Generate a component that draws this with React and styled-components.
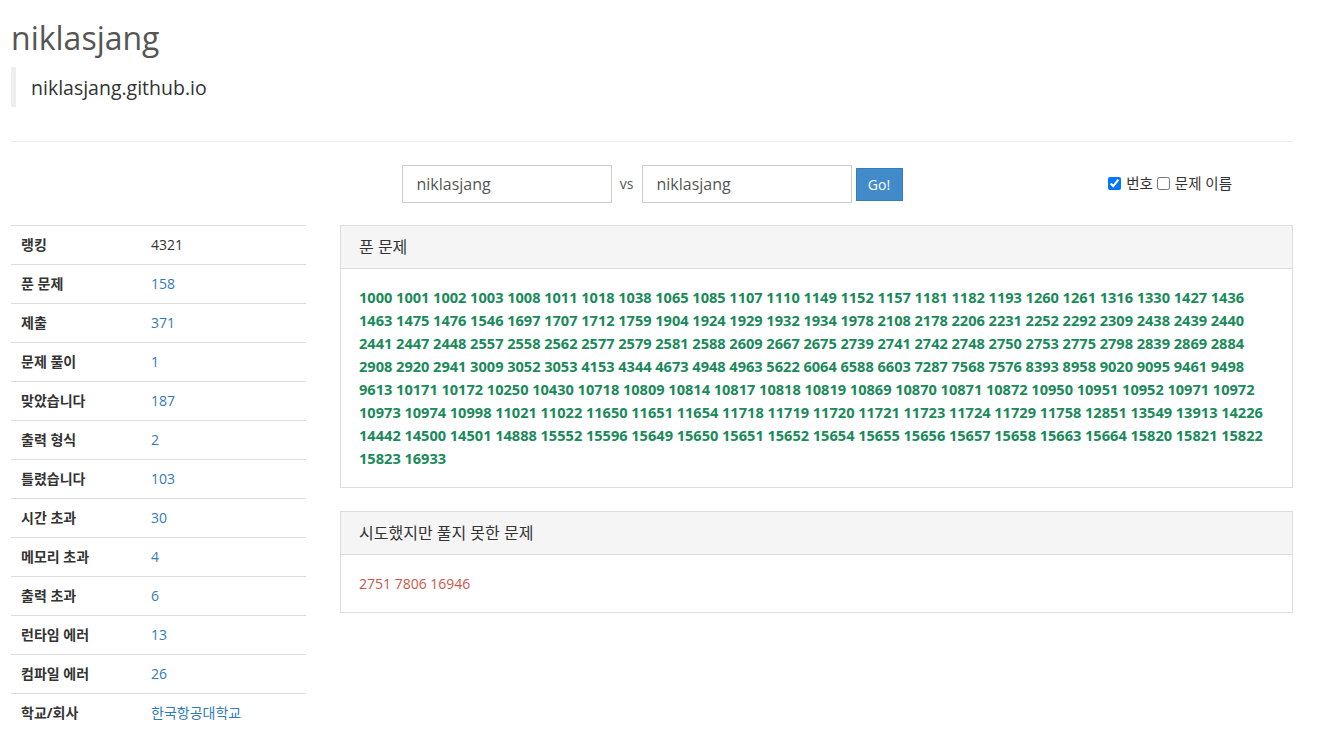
import React from "react";
import styled, { createGlobalStyle } from "styled-components";

const solved = [
  1000, 1001, 1002, 1003, 1008, 1011, 1018, 1038, 1065, 1085, 1107, 1110, 1149, 1152, 1157, 1181, 1182, 1193, 1260, 1261, 1316, 1330, 1427, 1436,
  1463, 1475, 1476, 1546, 1697, 1707, 1712, 1759, 1904, 1924, 1929, 1932, 1934, 1978, 2108, 2178, 2206, 2231, 2252, 2292, 2309, 2438, 2439, 2440,
  2441, 2447, 2448, 2557, 2558, 2562, 2577, 2579, 2581, 2588, 2609, 2667, 2675, 2739, 2741, 2742, 2748, 2750, 2753, 2775, 2798, 2839, 2869, 2884,
  2908, 2920, 2941, 3009, 3052, 3053, 4153, 4344, 4673, 4948, 4963, 5622, 6064, 6588, 6603, 7287, 7568, 7576, 8393, 8958, 9020, 9095, 9461, 9498,
  9613, 10171, 10172, 10250, 10430, 10718, 10809, 10814, 10817, 10818, 10819, 10869, 10870, 10871, 10872, 10950, 10951, 10952, 10971, 10972,
  10973, 10974, 10998, 11021, 11022, 11650, 11651, 11654, 11718, 11719, 11720, 11721, 11723, 11724, 11729, 11758, 12851, 13549, 13913, 14226,
  14442, 14500, 14501, 14888, 15552, 15596, 15649, 15650, 15651, 15652, 15654, 15655, 15656, 15657, 15658, 15663, 15664, 15820, 15821, 15822,
  15823, 16933,
];

const failed = [2751, 7806, 16946];

const stats = [
  { label: "랭킹", value: "4321", plain: true },
  { label: "푼 문제", value: "158" },
  { label: "제출", value: "371" },
  { label: "문제 풀이", value: "1" },
  { label: "맞았습니다", value: "187" },
  { label: "출력 형식", value: "2" },
  { label: "틀렸습니다", value: "103" },
  { label: "시간 초과", value: "30" },
  { label: "메모리 초과", value: "4" },
  { label: "출력 초과", value: "6" },
  { label: "런타임 에러", value: "13" },
  { label: "컴파일 에러", value: "26" },
  { label: "학교/회사", value: "한국항공대학교" },
];

const GlobalStyle = createGlobalStyle`
  * { box-sizing: border-box; }
  body {
    margin: 0;
    background: #fff;
    color: #333;
    font-family: "Open Sans", "Noto Sans CJK KR", sans-serif;
    font-size: 14px;
    line-height: 1.42857;
  }
`;

const Container = styled.div`
  width: 1282px;
  margin-left: 11px;
`;

const Title = styled.h1`
  margin: 20px 0 0;
  font-size: 32px;
  font-weight: 400;
  line-height: 35px;
  color: #555;
`;

const Quote = styled.blockquote`
  margin: 12px 0 34px;
  padding: 10px 15px 9px;
  border-left: 5px solid #eee;
  font-size: 19.5px;
  line-height: 21px;
  color: #333;
`;

const Rule = styled.hr`
  margin: 0;
  border: 0;
  border-top: 1px solid #eee;
`;

const FormRow = styled.div`
  display: grid;
  grid-template-columns: 1fr auto 1fr;
  align-items: center;
  margin: 23px 0 22px;
`;

const Compare = styled.form`
  grid-column: 2;
  display: flex;
  align-items: center;
`;

const Input = styled.input`
  width: 210px;
  height: 38px;
  padding: 6px 14px;
  border: 1px solid #ccc;
  border-radius: 0;
  font-family: inherit;
  font-size: 16px;
  color: #555;
  outline: none;
`;

const Vs = styled.span`
  width: 30px;
  text-align: center;
  color: #555;
  font-size: 14px;
`;

const GoButton = styled.button`
  margin-left: 4px;
  width: 47px;
  height: 33px;
  border: 1px solid #357ebd;
  border-radius: 0;
  background: #428bca;
  color: #fff;
  font-family: inherit;
  font-size: 14px;
  padding: 0;
`;

const Options = styled.div`
  grid-column: 3;
  justify-self: end;
  display: flex;
  align-items: center;
  padding-right: 61px;
  font-size: 14.5px;
  color: #333;
`;

const Option = styled.label`
  display: flex;
  align-items: center;
  gap: 5px;
  margin-left: ${(p) => (p.$first ? "0" : "4px")};

  input {
    margin: 0;
    width: 13px;
    height: 13px;
  }
`;

const Columns = styled.div`
  display: grid;
  grid-template-columns: 295px 1fr;
  gap: 34px;
  align-items: start;
`;

const StatTable = styled.table`
  width: 100%;
  border-collapse: collapse;
`;

const Row = styled.tr`
  border-top: 1px solid #ddd;
`;

const Label = styled.th`
  width: 140px;
  padding: 9px 10px;
  line-height: 20px;
  text-align: left;
  font-weight: 700;
  color: #333;
`;

const Value = styled.td`
  padding: 9px 0;
  line-height: 20px;
  color: ${(p) => (p.$plain ? "#333" : "#337ab7")};
`;

const Panel = styled.div`
  border: 1px solid #ddd;
  margin-bottom: 23px;
`;

const PanelHeading = styled.div`
  padding: 10px 18px;
  background: #f5f5f5;
  border-bottom: 1px solid #ddd;
  font-size: 16px;
  line-height: 22px;
  color: #333;
`;

const PanelBody = styled.div`
  padding: 17px 18px 17px;
  line-height: 23px;
`;

const Problem = styled.a`
  color: ${(p) => (p.$failed ? "#c9574a" : "#1a8a5a")};
  font-weight: ${(p) => (p.$failed ? 400 : 700)};
  font-size: ${(p) => (p.$failed ? "14px" : "14.6px")};
  text-decoration: none;
`;

function ProblemList({ items, failed }) {
  return items.map((n, i) => (
    <React.Fragment key={n}>
      <Problem href="#" $failed={failed}>
        {n}
      </Problem>
      {i < items.length - 1 ? " " : null}
    </React.Fragment>
  ));
}

export default function App() {
  return (
    <>
      <GlobalStyle />
      <Container>
        <Title>niklasjang</Title>
        <Quote>niklasjang.github.io</Quote>
        <Rule />
        <FormRow>
          <Compare onSubmit={(e) => e.preventDefault()}>
            <Input defaultValue="niklasjang" />
            <Vs>vs</Vs>
            <Input defaultValue="niklasjang" />
            <GoButton type="submit">Go!</GoButton>
          </Compare>
          <Options>
            <Option $first>
              <input type="checkbox" defaultChecked />
              번호
            </Option>
            <Option>
              <input type="checkbox" />
              문제 이름
            </Option>
          </Options>
        </FormRow>
        <Columns>
          <StatTable>
            <tbody>
              {stats.map((s) => (
                <Row key={s.label}>
                  <Label>{s.label}</Label>
                  <Value $plain={s.plain}>{s.value}</Value>
                </Row>
              ))}
            </tbody>
          </StatTable>
          <div>
            <Panel>
              <PanelHeading>푼 문제</PanelHeading>
              <PanelBody>
                <ProblemList items={solved} />
              </PanelBody>
            </Panel>
            <Panel>
              <PanelHeading>시도했지만 풀지 못한 문제</PanelHeading>
              <PanelBody>
                <ProblemList items={failed} failed />
              </PanelBody>
            </Panel>
          </div>
        </Columns>
      </Container>
    </>
  );
}
